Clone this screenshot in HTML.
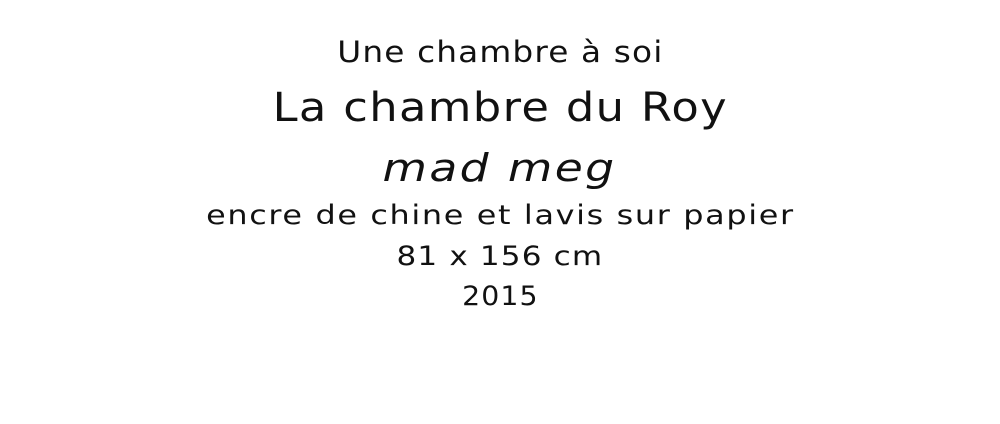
<!DOCTYPE html>
<html><head><meta charset="utf-8"><style>
html,body{margin:0;padding:0;background:#fff;width:1000px;height:424px;overflow:hidden}
.l{position:absolute;left:0;width:1000px;text-align:center;color:#111;font-family:"DejaVu Sans","Liberation Sans",sans-serif;white-space:nowrap;font-weight:normal}
.l span{display:inline-block;transform-origin:center}
</style></head><body>
<div class="l" style="top:35px;font-size:29px;letter-spacing:1px"><span style="transform:scaleX(1.13)">Une chambre à soi</span></div>
<div class="l" style="top:85px;font-size:40px;letter-spacing:1.2px"><span style="transform:scaleX(1.12)">La chambre du Roy</span></div>
<div class="l" style="top:146px;font-size:38px;font-style:italic;letter-spacing:2px"><span style="transform:scaleX(1.2)">mad meg</span></div>
<div class="l" style="top:200px;font-size:27px;letter-spacing:1.4px"><span style="transform:scaleX(1.18)">encre de chine et lavis sur papier</span></div>
<div class="l" style="top:241px;font-size:27px;letter-spacing:1px"><span style="transform:scaleX(1.15)">81 x 156 cm</span></div>
<div class="l" style="top:281px;font-size:27px;letter-spacing:1px"><span style="transform:scaleX(1.05)">2015</span></div>
</body></html>
